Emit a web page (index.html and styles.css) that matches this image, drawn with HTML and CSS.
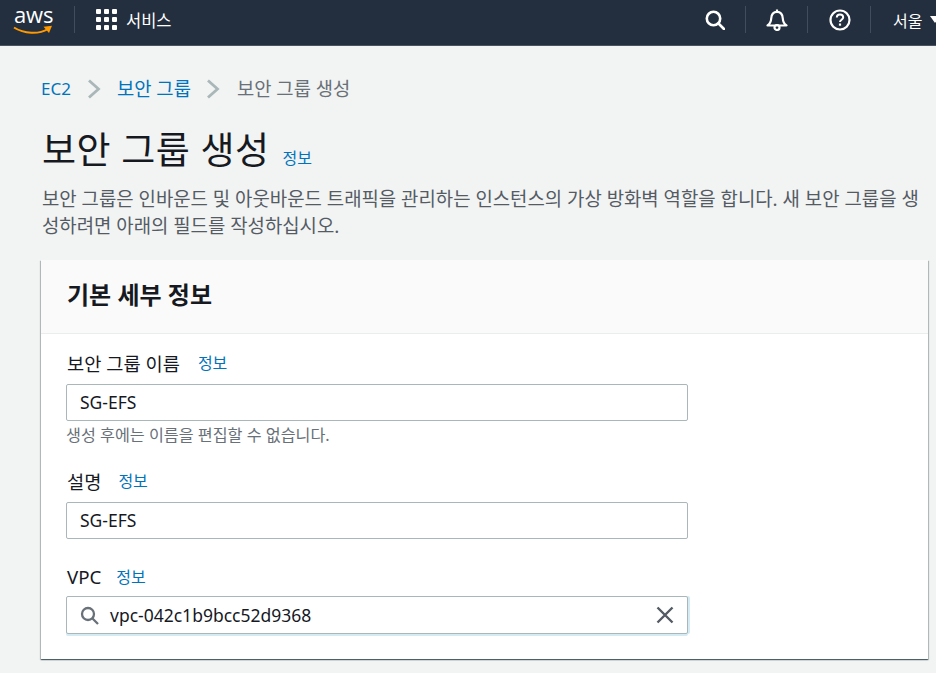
FILE: index.html
```html
<!DOCTYPE html>
<html lang="ko">
<head>
<meta charset="utf-8">
<title>보안 그룹 생성</title>
<link rel="stylesheet" href="styles.css">
</head>
<body>
<header class="topbar">
  <div class="logo-cell">
    <div class="logo">
      <span class="logo-text">aws</span>
      <svg class="smile" width="40" height="10" viewBox="0 0 40 10"><path d="M1 2.500C11 9 26 9.500 35 4" fill="none" stroke="#f90" stroke-width="2"/><path d="M30.500 1.800L39 .8 36 8z" fill="#f90"/></svg>
    </div>
  </div>
  <div class="services">
    <svg class="grid-icon" width="21" height="21" viewBox="0 0 21 21" fill="#fff"><rect width="5" height="5" rx="1"/><rect x="8" width="5" height="5" rx="1"/><rect x="16" width="5" height="5" rx="1"/><rect y="8" width="5" height="5" rx="1"/><rect x="8" y="8" width="5" height="5" rx="1"/><rect x="16" y="8" width="5" height="5" rx="1"/><rect y="16" width="5" height="5" rx="1"/><rect x="8" y="16" width="5" height="5" rx="1"/><rect x="16" y="16" width="5" height="5" rx="1"/></svg>
    <span>서비스</span>
  </div>
  <div class="tools">
    <div class="tool tool-search">
      <svg width="20" height="20" viewBox="0 0 20 20" fill="none" stroke="#fff" stroke-width="2.600"><circle cx="8.500" cy="8.500" r="6.700"/><path d="M13.500 13.500L19 19" stroke-linecap="round"/></svg>
    </div>
    <div class="tool tool-bell">
      <svg width="22" height="22" viewBox="0 0 22 22" fill="none" stroke="#fff" stroke-width="2.200"><path d="M1.500 16.500c3-2 3.500-3.500 3.700-7C5.400 5.500 7.500 2.800 11 2.800s5.600 2.700 5.800 6.700c.2 3.500.7 5 3.700 7z" stroke-linejoin="round"/><path d="M11 .5v2.500"/><circle cx="11" cy="18.500" r="2.500"/></svg>
    </div>
    <div class="tool tool-help">
      <svg width="22" height="22" viewBox="0 0 22 22" fill="none" stroke="#fff" stroke-width="2.200"><circle cx="11" cy="11" r="9.500"/><path d="M7.800 8.500c0-2 1.400-3 3.200-3s3.200 1 3.200 2.800c0 2.400-3.200 2.400-3.200 4.700" stroke-width="2"/><path d="M11 14.500v2.200" stroke-width="2.200"/></svg>
    </div>
    <div class="tool tool-region"><span>서울</span><i class="caret"></i></div>
  </div>
</header>

<main class="page">
  <nav class="crumbs">
    <a class="link crumb-latin" href="#">EC2</a>
    <svg class="chev chev-a" width="14" height="20" viewBox="0 0 14 20" fill="none" stroke="#aab7b8" stroke-width="2.800"><path d="M2 1.500l9.500 8.500L2 18.500"/></svg>
    <a class="link" href="#">보안 그룹</a>
    <svg class="chev chev-b" width="14" height="20" viewBox="0 0 14 20" fill="none" stroke="#aab7b8" stroke-width="2.800"><path d="M2 1.500l9.500 8.500L2 18.500"/></svg>
    <span class="crumb-current">보안 그룹 생성</span>
  </nav>

  <div class="title-row">
    <h1>보안 그룹 생성</h1>
    <a class="link info" href="#">정보</a>
  </div>
  <p class="desc">보안 그룹은 인바운드 및 아웃바운드 트래픽을 관리하는 인스턴스의 가상 방화벽 역할을 합니다. 새 보안 그룹을 생성하려면 아래의 필드를 작성하십시오.</p>

  <section class="card">
    <div class="card-head"><h2>기본 세부 정보</h2></div>
    <div class="card-body">
      <div class="field field-name">
        <div class="label-row"><label>보안 그룹 이름</label><a class="link info" href="#">정보</a></div>
        <div class="input">SG-EFS</div>
        <div class="hint">생성 후에는 이름을 편집할 수 없습니다.</div>
      </div>
      <div class="field field-desc">
        <div class="label-row"><label>설명</label><a class="link info" href="#">정보</a></div>
        <div class="input">SG-EFS</div>
      </div>
      <div class="field field-vpc">
        <div class="label-row"><label>VPC</label><a class="link info" href="#">정보</a></div>
        <div class="input input-search">
          <svg width="19" height="19" viewBox="0 0 19 19" fill="none" stroke="#687078" stroke-width="2.300"><circle cx="8" cy="8" r="6"/><path d="M12.500 12.500L18 18"/></svg>
          <span class="search-value">vpc-042c1b9bcc52d9368</span>
          <svg width="18" height="18" viewBox="0 0 18 18" fill="none" stroke="#545b64" stroke-width="2.400"><path d="M1.500 1.500l15 15M16.500 1.500l-15 15"/></svg>
        </div>
      </div>
    </div>
  </section>
</main>
</body>
</html>
```

FILE: styles.css
```css
* { box-sizing: border-box; }
html, body { margin: 0; padding: 0; }
body {
  width: 936px;
  height: 673px;
  overflow: hidden;
  background: #f2f3f3;
  color: #16191f;
  font-family: "Noto Sans", "Noto Sans CJK KR", sans-serif;
}
.topbar {
  height: 46px;
  padding-bottom: 6px;
  background: #232f3e;
  border-bottom: 1px solid #4a5461;
  display: flex;
  align-items: center;
  color: #fff;
  font-size: 16.500px;
}
.logo-cell {
  width: 75px;
  height: 27px;
  border-right: 1px solid #414d5c;
  padding-left: 13px;
}
.logo { display: flex; flex-direction: column; width: 40px; }
.logo-text {
  font-family: "Open Sans", sans-serif;
  font-size: 22px;
  line-height: 18px;
  height: 17px;
  letter-spacing: -.1px;
  margin-top: -1px;
  padding-left: 1px;
}
.smile { display: block; margin-top: 3px; }
.services {
  display: flex;
  align-items: center;
  gap: 9px;
  padding-left: 21px;
}
.grid-icon { display: block; }
.tools {
  margin-left: auto;
  display: flex;
  align-items: center;
  margin-right: -6px;
}
.tool {
  height: 27px;
  display: flex;
  align-items: center;
  justify-content: center;
  border-right: 1px solid #414d5c;
}
.tool-search { width: 62px; }
.tool-bell { width: 62px; }
.tool-help { width: 63px; padding-left: 1px; }
.tool-region {
  width: 71px;
  border-right: 0;
  justify-content: flex-start;
  padding-left: 22px;
  gap: 8px;
  font-size: 16px;
}
.caret {
  width: 0; height: 0;
  border-left: 5px solid transparent;
  border-right: 5px solid transparent;
  border-top: 7px solid #fff;
}
.page { padding: 30px 0 0 41px; width: 929px; }
.link { color: #0073bb; text-decoration: none; }
.crumbs {
  display: flex;
  align-items: center;
  height: 24px;
  font-size: 18.800px;
}
.crumb-latin { font-size: 17px; }
.chev { margin-top: 2px; }
.chev-a { margin: 2px 16px 0 16px; }
.chev-b { margin: 2px 17px 0 15px; }
.crumb-current { color: #687078; }
.title-row {
  display: flex;
  align-items: baseline;
  gap: 13px;
  margin-top: 25px;
  padding-left: 1px;
}
h1 {
  margin: 0;
  font-size: 37px;
  font-weight: 400;
  line-height: 50px;
  letter-spacing: .5px;
}
.info { font-size: 16px; font-weight: 400; }
.desc {
  margin: 11px 0 0 1px;
  width: 884px;
  font-size: 18.880px;
  line-height: 27px;
  color: #545b64;
  word-break: break-all;
}
.card {
  margin-top: 20px;
  width: 887px;
  background: #fff;
  box-shadow: 0 1px 1px 0 rgba(0,28,36,.5), 1px 1px 1px 0 rgba(0,28,36,.2), -1px 1px 1px 0 rgba(0,28,36,.2);
}
.card-head {
  height: 74px;
  padding: 0 26px 3px;
  display: flex;
  align-items: center;
  background: #fafafa;
  border-bottom: 1px solid #eaeded;
}
h2 {
  margin: 0;
  font-size: 24px;
  font-weight: 700;
  line-height: 30px;
}
.card-body { padding: 16px 25px 25px; }
.label-row {
  display: flex;
  align-items: center;
  gap: 18px;
  height: 26px;
  padding: 0 0 2px 1px;
  font-size: 18.700px;
}
label { font-weight: 400; }
.input {
  margin-top: 8px;
  width: 622px;
  height: 37px;
  padding: 0 13px 1px;
  display: flex;
  align-items: center;
  background: #fff;
  border: 1px solid #aab7b8;
  border-radius: 2px;
  font-size: 17.500px;
}
.hint {
  margin-top: 4px;
  height: 20px;
  line-height: 20px;
  font-size: 16.200px;
  color: #687078;
}
.field-desc { margin-top: 23px; }
.field-desc .label-row { gap: 17px; }
.field-vpc { margin-top: 25px; }
.field-vpc .label-row { gap: 15px; }
.field-vpc .input { margin-top: 6px; height: 38px; padding-bottom: 0; }
.input-search {
  gap: 11px;
  box-shadow: 0 2px 0 0 #d5ebf3, 2px 0 0 0 #d5ebf3;
}
.search-value { flex: 1; }
```
